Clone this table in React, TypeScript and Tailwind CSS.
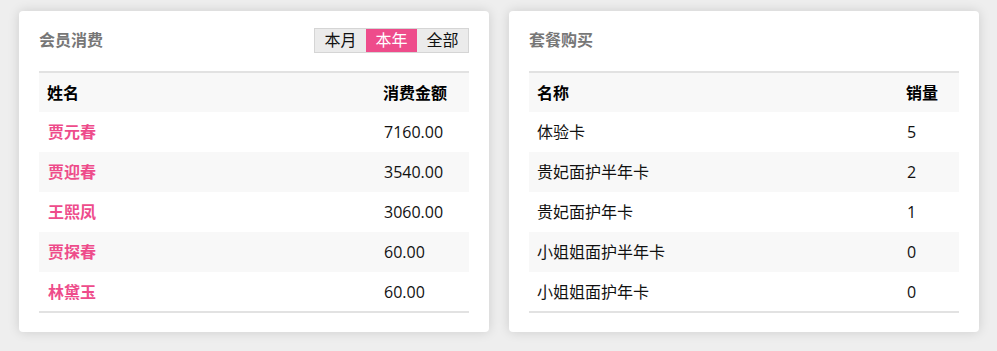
import React from 'react';

const members = [
  {name: '贾元春', amount: '7160.00'},
  {name: '贾迎春', amount: '3540.00'},
  {name: '王熙凤', amount: '3060.00'},
  {name: '贾探春', amount: '60.00'},
  {name: '林黛玉', amount: '60.00'},
];

const packages = [
  {name: '体验卡', count: 5},
  {name: '贵妃面护半年卡', count: 2},
  {name: '贵妃面护年卡', count: 1},
  {name: '小姐姐面护半年卡', count: 0},
  {name: '小姐姐面护年卡', count: 0},
];

const font = {fontFamily: '"Segoe UI", "Open Sans", "Noto Sans CJK SC", sans-serif'};

const App: React.FC = () => {
  const [range, setRange] = React.useState('本年');

  return (
    <div
      className="min-h-[351px] w-[997px] bg-[#eeeeee] pl-[19px] pt-[11px] flex gap-5 items-start"
      style={font}>
      {/* 会员消费 */}
      <div className="w-[470px] h-[321px] bg-white rounded-[4px] shadow-[0_0_12px_rgba(0,0,0,0.14)] px-5">
        <div className="h-[60px] flex items-center justify-between pb-[2px]">
          <h3 className="text-[16px] font-bold text-[#777]">会员消费</h3>
          <div className="flex border border-[#d5d5d5]">
            {['本月', '本年', '全部'].map((r) => (
              <button
                key={r}
                onClick={() => setRange(r)}
                className={`w-[51px] h-[23px] text-[16px] leading-[23px] ${
                  range === r ? 'bg-[#ee4c8b] text-white' : 'bg-[#ebebeb] text-[#111]'
                }`}>
                {r}
              </button>
            ))}
          </div>
        </div>
        <table className="w-full table-fixed border-t-2 border-b-2 border-[#e2e2e2] text-[16px] text-[#111]">
          <colgroup>
            <col />
            <col className="w-[86px]" />
          </colgroup>
          <thead>
            <tr className="h-10 bg-[#f8f8f8]">
              <th className="text-left font-bold pl-2 text-black">姓名</th>
              <th className="text-left font-bold text-black">消费金额</th>
            </tr>
          </thead>
          <tbody>
            {members.map((m, i) => (
              <tr key={m.name} className={`h-10 ${i % 2 ? 'bg-[#f8f8f8]' : 'bg-white'}`}>
                <td className="pl-[9px] font-bold text-[#ee4c8b]">{m.name}</td>
                <td className="pl-[1px]">{m.amount}</td>
              </tr>
            ))}
          </tbody>
        </table>
      </div>

      {/* 套餐购买 */}
      <div className="w-[470px] h-[321px] bg-white rounded-[4px] shadow-[0_0_12px_rgba(0,0,0,0.14)] px-5">
        <div className="h-[60px] flex items-center pb-[2px]">
          <h3 className="text-[16px] font-bold text-[#777]">套餐购买</h3>
        </div>
        <table className="w-full table-fixed border-t-2 border-b-2 border-[#e2e2e2] text-[16px] text-[#111]">
          <colgroup>
            <col />
            <col className="w-[53px]" />
          </colgroup>
          <thead>
            <tr className="h-10 bg-[#f8f8f8]">
              <th className="text-left font-bold pl-2 text-black">名称</th>
              <th className="text-left font-bold text-black">销量</th>
            </tr>
          </thead>
          <tbody>
            {packages.map((p, i) => (
              <tr key={p.name} className={`h-10 ${i % 2 ? 'bg-[#f8f8f8]' : 'bg-white'}`}>
                <td className="pl-2">{p.name}</td>
                <td className="pl-[1px]">{p.count}</td>
              </tr>
            ))}
          </tbody>
        </table>
      </div>
    </div>
  );
};

export default App;
